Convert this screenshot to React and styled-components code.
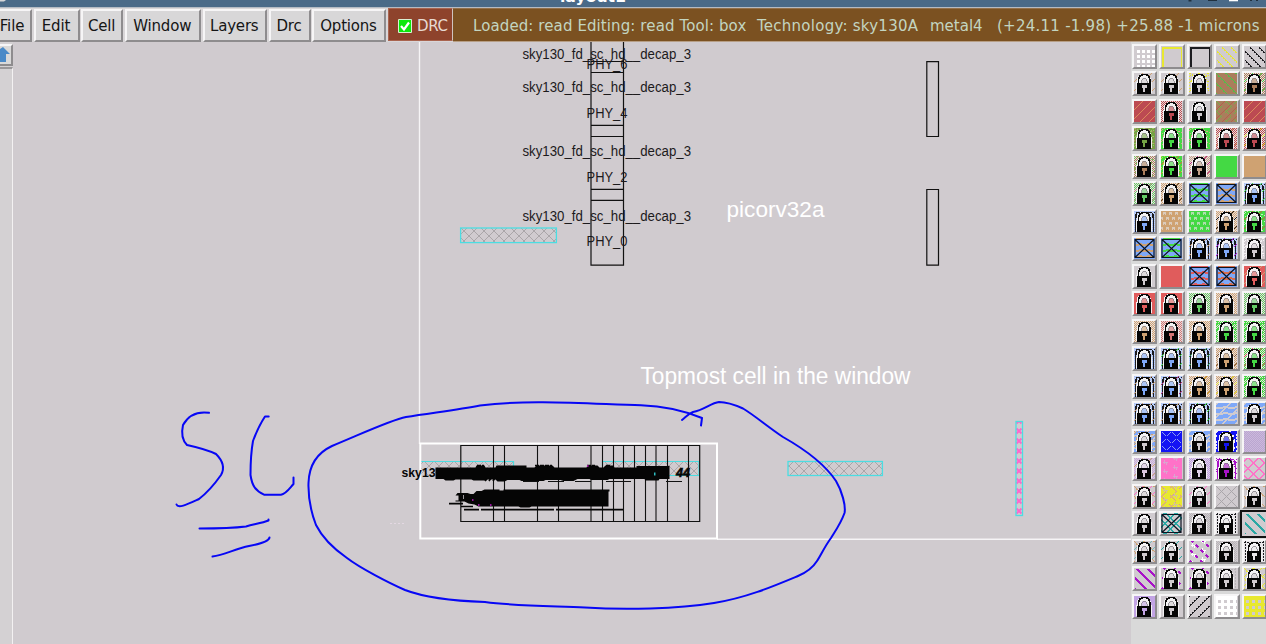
import React from 'react';
import styled, { createGlobalStyle, css } from 'styled-components';

const Global = createGlobalStyle`
  * { box-sizing: border-box; }
  html, body { margin: 0; padding: 0; overflow: hidden; }
  body { font-family: "DejaVu Sans", "Noto Sans", sans-serif; }
`;

const Window = styled.div`
  width: 1266px;
  height: 644px;
  display: flex;
  flex-direction: column;
  overflow: hidden;
  background: #d0cbcf;
`;

const TitleBar = styled.header`
  flex: none;
  height: 8px;
  display: flex;
  overflow: hidden;
  background: #4a6a88;
  border-bottom: 1px solid #b4bbc4;
`;

const TitleArt = styled.svg`
  display: block;
  width: 1266px;
  height: 7px;
`;

const MenuBar = styled.nav`
  flex: none;
  height: 34px;
  display: flex;
  align-items: stretch;
  background: #d9d6d8;
`;

const Menus = styled.div`
  width: 388px;
  flex: none;
  display: flex;
  gap: 1.5px;
  padding-top: 1px;
`;

const raised = css`
  border-style: solid;
  border-color: #f6f5f6 #8e8c8e #8e8c8e #f6f5f6;
`;

const MenuButton = styled.button`
  ${raised}
  border-width: 2px;
  ${p => p.$first && 'border-left-width: 0;'}
  width: ${p => p.$w}px;
  height: 33px;
  padding: 0 ${p => (p.$first ? 6 : 1)}px 0 0;
  background: #d8d7d8;
  color: #151515;
  font: 15px "DejaVu Sans", sans-serif;
  letter-spacing: ${p => p.$ls}px;
  white-space: nowrap;
  display: flex;
  align-items: center;
  justify-content: center;
`;

const DrcToggle = styled.div`
  width: 65px;
  flex: none;
  display: flex;
  align-items: center;
  gap: 5px;
  padding: 2px 0 0 9px;
  margin-bottom: 1px;
  background: #8e432c;
  border: 1px solid #a9644f;
  border-right: 1px solid #d0c4c0;
  color: #e6d9d2;
  font-size: 15px;
  letter-spacing: -0.4px;
`;

const Tick = styled.svg`
  width: 14px;
  height: 14px;
  flex: none;
`;

const Status = styled.div`
  flex: 1;
  display: flex;
  align-items: center;
  padding: 1px 0 0 20px;
  background: #7b5121;
  border-top: 1px solid #93704a;
  border-bottom: 1px solid #b79f86;
  color: #c3d5c0;
  font-size: 15px;
  white-space: pre;
`;

const StatusPart = styled.span`
  flex: none;
  width: ${p => p.$w}px;
  letter-spacing: ${p => p.$ls || 0}px;
`;

const Main = styled.main`
  flex: 1;
  min-height: 0;
  display: flex;
`;

const ScrollColumn = styled.div`
  flex: none;
  width: 13px;
  display: flex;
  flex-direction: column;
  background: #d4d1d3;
`;

const ScrollButton = styled.div`
  ${raised}
  border-width: 2px 2px 2px 0;
  height: 22px;
  margin-top: 2px;
  background: #d9d9d9;
`;

const ScrollTrack = styled.div`
  ${raised}
  border-width: 2px 1px 0 0;
  border-top-color: #9a989a;
  border-right-color: #f3f1f2;
  flex: 1;
  margin-top: 1px;
`;

const ArrowUp = styled.svg`
  display: block;
  width: 11px;
  height: 18px;
`;

const Layout = styled.svg`
  display: block;
  flex: none;
  width: 1118px;
  height: 602px;
  background: #d0cbcf;
  font-family: "Liberation Sans", Arial, sans-serif;
`;

const Palette = styled.aside`
  flex: none;
  width: 135px;
  padding: 1.6px 0 0 0.5px;
  background: #d9d9d9;
  overflow: hidden;
`;

const Swatches = styled.div`
  display: grid;
  grid-template-columns: repeat(5, 27.55px);
  grid-auto-rows: 27.5px;
`;

const Swatch = styled.div`
  ${raised}
  border-width: 2px;
  width: 25.6px;
  height: 25.2px;
  background: #d0cbcf;
  ${p => p.$selected && css`
    border: 2px solid #111;
    width: 28px;
    height: 28px;
    margin: -1.5px 0 0 -1.5px;
    padding: 1.5px;
  `}
`;

const SwatchArt = styled.svg`
  display: block;
  width: 21px;
  height: 21px;
  shape-rendering: crispEdges;
`;

const GREY = '#d0cbcf', TAN = '#cfa272', GREEN = '#44d944', RED = '#e05c5c', BLUE = '#7fa8f8';
const WHITE = '#f4f2f3', BLACK = '#1c1c20', YELLOW = '#e8e830', PINK = '#ff72c8', LAV = '#bd9fe0';
const PURPLE = '#a812c8', TEAL = '#2aa8a4', BROWN = '#aa7e5c', CRIMSON = '#bc4a52', NAVY = '#1414f4';

const pixels = test => {
  let d = '';
  for (let y = 0; y < 21; y++) for (let x = 0; x < 21; x++) if (test(x, y)) d += `M${x} ${y}h1v1h-1z`;
  return d;
};
const PATTERNS = {
  frame: pixels((x, y) => (y === 1 || y === 2) ? x >= 1 && x <= 20 : y > 1 && (x === 1 || x === 20 || (x === 2 && y < 21))),
  dots: pixels((x, y) => x > 2 && y > 3 && (x - 3) % 5 < 3 && (y - 4) % 5 < 3),
  grid: pixels((x, y) => !(x > 0 && y > 2 && (x + 4) % 6 < 3 && (y + 2) % 6 < 3)),
  pin: pixels((x, y) => (x + (Math.floor(y / 5) % 2) * 3 + 4) % 6 < 3 && y % 5 > 0 && y % 5 < 4 && (y % 5 !== 3 || x % 3 > 0)),
  holes: pixels((x, y) => x > 1 && y > 2 && (x - 2) % 5 < 3 && (y - 3) % 5 < 3),
  diag: pixels((x, y) => (x - y + 40) % 10 === 0 || ((x - y + 41) % 10 === 0 && y % 3 === 0)),
  bold: pixels((x, y) => x > 0 && y > 0 && ((x - y + 40) % 9 === 0 || ((x - y + 41) % 9 === 0 && y % 2 === 0))),
  rdiag: pixels((x, y) => (x + y + 1) % 9 === 0),
  rbold: pixels((x, y) => (x + y) % 10 === 0 || ((x + y) % 10 === 9 && y % 2 === 0)),
  thick: pixels((x, y) => x > 0 && y > 0 && (x - y + 43) % 11 < 3),
  dither: pixels((x, y) => (x + y) % 2 === 0),
  speck: pixels((x, y) => (x * 37 + y * 61 + x * y * 13) % 11 < 2),
  streak: pixels((x, y) => (x + y * 3 + ((x * y) % 5)) % 9 < 2),
  edge: pixels((x, y) => (y === 1 && x > 1 && x % 6 > 1) || ((x === 1 || x === 19) && y > 2) || ((x === 2 || x === 18) && y > 1 && y < 7)),
  dotEdge: pixels((x, y) => (y === 1 || x === 1 || x === 19) && (x + y) % 3 > 0),
  wave: pixels((x, y) => (y + (x % 12 > 6 ? 1 : 0)) % 6 < 4 && (x + y) % 13 > 1),
  bands: pixels((x, y) => (y + (x % 8 > 4 ? 1 : 0)) % 6 < 2 && x > 1 && x < 19),
  dash: pixels((x, y) => (x - y + 42) % 11 < 3 && (x + y) % 10 < 5),
  net: pixels((x, y) => (x + y) % 10 === 0 || (x - y + 40) % 10 === 0),
  thicknet: pixels((x, y) => (x + y + 9) % 11 < 2 || (x - y + 40) % 11 < 2),
  dashnet: pixels((x, y) => ((x + y) % 10 === 0 && x % 9 < 6) || ((x - y + 40) % 10 === 0 && y % 9 < 6)),
  blob: pixels((x, y) => { const u = x % 10, v = (y + (x > 9 ? 4 : 0)) % 9; return (u === 3 && v > 1 && v < 6) || (u === 5 && v > 3 && v < 7) || (v === 4 && u > 1 && u < 7); }),
  tri: pixels((x, y) => { const r = y % 7; const k = (x + (Math.floor(y / 7) % 2) * 5) % 10; return r > 0 && r < 5 && Math.abs(k - 5) === 5 - r; }),
};

const L = (bg, ...layers) => ({ lock: true, bg, layers });
const P = (bg, ...layers) => ({ bg, layers });
const X = (bg, ...layers) => ({ cross: true, bg, layers });
const bb = (...more) => ({ ...L('#c6d4f2', ['dither', '#a7c1fa'], ['edge', BLACK], ...more), hole: BLUE });
const D = (color, ...more) => ({ ...L('#e6dddb', ['dither', color], ...more), hole: color });

const LAYERS = [
  P(GREY, ['dots', '#ffffff']), P(GREY, ['frame', YELLOW]), P(GREY, ['frame', BLACK]), P(GREY, ['bold', YELLOW]), P(GREY, ['bold', BLACK]),
  L(GREY, ['rdiag', TAN]), L(GREY, ['rdiag', TAN]), L(GREY, ['streak', YELLOW]), P(BROWN, ['diag', '#4fc24a']), D(BROWN, ['rdiag', GREEN]),
  P(CRIMSON, ['rdiag', '#dc8a5c']), D(CRIMSON), L(GREY), P(BROWN, ['dashnet', '#70b24c'], ['rdiag', '#b5604f']), P(CRIMSON, ['rdiag', '#dc8a5c']),
  L('#74a344', ['speck', BROWN], ['streak', '#9bc466']), L(GREEN, ['speck', '#d8a58a']), L(GREEN, ['speck', '#d8a58a']), D(CRIMSON, ['rdiag', TAN]), D(CRIMSON, ['rdiag', YELLOW]),
  D(BROWN, ['speck', '#74c95e']), L(GREEN, ['rdiag', '#d96a38'], ['speck', '#b9e23f']), D('#c3a189', ['rdiag', '#c02880']), P(GREEN), P(TAN),
  D('#63cb65', ['rdiag', '#c69090']), D(TAN, ['rdiag', '#5a4026']), X(BLUE, ['bands', GREEN]), X(BLUE, ['bands', TAN]), bb(['rdiag', GREEN]),
  bb(), P(TAN, ['pin', '#dccbbb']), P(GREEN, ['pin', '#b0dcae']), D(TAN, ['rdiag', BLACK]), L(GREEN, ['speck', '#c5e8c3'], ['rdiag', '#bf603d']),
  X(BLUE, ['bands', TAN]), X(BLUE, ['bands', GREEN]), bb(['rdiag', TAN]), bb(['rdiag', PURPLE]), L(GREY, ['streak', WHITE]),
  L(GREY), P(RED), X(BLUE, ['bands', RED]), X(BLUE, ['bands', '#d96d4b']), L(RED, ['rdiag', TAN]),
  L(RED), L(RED), D('#63cb65'), D(TAN), D('#63cb65'),
  D(TAN), D('#d47575'), D(TAN), D(GREEN, ['streak', GREEN]), D(GREEN, ['streak', GREEN]),
  bb(), bb(['rdiag', GREEN]), bb(['rdiag', '#359650']), D(TAN, ['rdiag', '#7e5834']), D(GREEN, ['rdiag', RED]),
  bb(['rdiag', TAN]), bb(['rdiag', '#b42e74']), D(TAN, ['rdiag', '#c99624']), D(TAN, ['rdiag', YELLOW]), D(GREEN, ['streak', GREEN]),
  bb(['rdiag', TAN]), bb(['rdiag', TAN]), bb(['rdiag', GREEN]), P(GREY, ['wave', BLUE]), L(GREY, ['wave', BLUE]),
  L(GREY, ['wave', BLUE], ['speck', TAN]), P(NAVY, ['tri', '#8e9bed']), L(GREY, ['wave', BLUE]), { ...L(WHITE, ['edge', NAVY], ['wave', NAVY]), hole: NAVY }, P('#cbb8dc', ['dither', '#baa6d0']),
  L('#dcc9df', ['dither', '#c5b1d9'], ['rdiag', TAN]), P(PINK, ['blob', '#dba4ce']), L('#dfd2e8', ['dither', LAV]), { ...L(WHITE, ['edge', PURPLE], ['speck', PURPLE]), hole: PURPLE }, P(GREY, ['thicknet', PINK]),
  L(GREY, ['diag', TAN], ['rdiag', PINK]), P(YELLOW, ['dashnet', '#d98fa6'], ['blob', '#d3c39a']), L(GREY, ['rdiag', PINK]), P(GREY, ['net', '#aaa6aa']), L(GREY, ['diag', TAN]),
  L(GREY), X(GREY, ['thicknet', TEAL]), L(GREY, ['dither', '#b7b4b7']), L('#e9e7e9', ['dotEdge', BLACK]), { ...P(GREY, ['thick', TEAL]), selected: true },
  L(GREY, ['diag', TAN], ['rdiag', '#76bcb9']), L(GREY, ['rdiag', TEAL]), P(GREY, ['blob', '#ffffff'], ['dash', PURPLE]), L(GREY, ['dither', '#b7b4b7']), L('#e9e7e9', ['dotEdge', BLACK]),
  P(GREY, ['thick', PURPLE]), L(GREY, ['dash', PURPLE]), L(GREY, ['dash', PURPLE]), L(GREY, ['dotEdge', '#b7b4b7']), L(GREY, ['rdiag', YELLOW], ['diag', YELLOW]),
  L('#c2a4e4'), L(GREY), P(GREY, ['rbold', BLACK]), P(GREY, ['grid', '#ffffff']), P(GREY, ['grid', YELLOW]),
];

function Lock({ color }) {
  return (
    <g>
      <path d="M3 10V6l1-3 3-2.500h6l3 2.500 1 3v4z" fill="#f3f2f3" />
      <path d="M7.500 10V6.500L9 4.500h2.500L13 6.500V10z" fill={color} opacity=".6" />
      <path d="M4.500 11V6l1.300-3L8.500 1.500h3.500L14.500 3l1.200 3v5" fill="none" stroke="#0a0a0a" strokeWidth="1.800" />
      <path d="M7.200 11V7.500L9 5.800h2.500L13 7.500V11" fill="none" stroke="#77747a" strokeWidth=".7" />
      <path d="M2 9h1v11H2zM17 9h1v11h-1z" fill="#f3f2f3" />
      <path d="M3 10h14v10.500H3z" fill="#050505" />
      <path d="M8 12h4.500v3H11.300v3.500H9.200V15H8z" fill={color} />
    </g>
  );
}

function LayerSwatch({ spec }) {
  return (
    <Swatch $selected={spec.selected}>
      <SwatchArt viewBox="0 0 21 21">
        <path d="M0 0h21v21H0z" fill={spec.bg} />
        {spec.layers.map(([name, color], i) => <path key={i} d={PATTERNS[name]} fill={color} />)}
        {spec.cross && <path d="M1 1.500h19v18H1zM1 1.500l19 18M20 1.500l-19 18" fill="none" stroke="#0c1420" strokeWidth="1.200" shapeRendering="auto" />}
        {spec.lock && <Lock color={spec.hole || spec.bg} />}
      </SwatchArt>
    </Swatch>
  );
}

const MENUS = [
  ['File', 32, -0.1], ['Edit', 46, -0.1], ['Cell', 42, -0.2], ['Window', 76.5, -0.2],
  ['Layers', 64.5, -0.2], ['Drc', 42, -0.2], ['Options', 74, -0.2],
];

const DECAPS = [[58.5, 69, 'PHY_6'], [92, 117.500, 'PHY_4'], [156, 181.500, 'PHY_2'], [221, 246, 'PHY_0']];
const COLUMN_LINES = [493.5, 504.5, 537.5, 558.5, 591, 602.5, 613.5, 623.5, 634.5, 645.5, 656, 667.5, 688.5];

function CellLabel({ x, y, width, children }) {
  return <text x={x} y={y} fontSize="13.800" textLength={width} lengthAdjust="spacingAndGlyphs" fill="#1c1a1c">{children}</text>;
}

function Metal({ x, y, w, h, fill = 'url(#metal)' }) {
  return <rect x={x} y={y} width={w} height={h} fill={fill} stroke="#4bdde2" strokeWidth="1.3" />;
}

function LayoutView() {
  return (
    <Layout viewBox="13 42 1118 602">
      <defs>
        <pattern id="metal" width="10" height="10" x="464" y="231" patternUnits="userSpaceOnUse">
          <path d="M0 0l10 10M10 0L0 10" stroke="#aaa6a9" strokeWidth="1" />
        </pattern>
        <pattern id="via" width="8" height="10" x="1015" y="426" patternUnits="userSpaceOnUse">
          <path d="M1.500 2.500l5 5M6.500 2.500l-5 5" stroke="#ff66ca" strokeWidth="2" />
        </pattern>
      </defs>
      <path d="M419.500 42v402M717 539.300h414" stroke="#f6f4f6" strokeWidth="1.400" fill="none" />

      <g fill="none" stroke="#111" strokeWidth="1.200">
        <path d="M591 42V265.200H623.500V42M591 61.500h32.500M591 72.500h32.500M591 125.300h32.500M591 136.500h32.500M591 189.300h32.500M591 200.300h32.500" />
        <path d="M926.800 61.700h11.700v74.800h-11.700zM926.800 189.500h11.700v75.700h-11.700z" />
      </g>
      {DECAPS.map(([nameY, idY, id]) => (
        <g key={id}>
          <CellLabel x={522.5} y={nameY} width={168.5}>sky130_fd_sc_hd__decap_3</CellLabel>
          <CellLabel x={586.5} y={idY} width={41}>{id}</CellLabel>
        </g>
      ))}
      <Metal x={460.6} y={228} w={95.8} h={14.6} />
      <Metal x={788} y={461.5} w={94.4} h={14} />
      <Metal x={1016} y={421.5} w={6.5} h={94} fill="url(#via)" />

      <text x="726.500" y="217" fontSize="22.500" textLength="98" lengthAdjust="spacingAndGlyphs" fill="#fff">picorv32a</text>
      <text x="640.500" y="383.500" fontSize="23" textLength="270" lengthAdjust="spacingAndGlyphs" fill="#fff">Topmost cell in the window</text>

      <path d="M421 461.500h92v14.500h-92zM602 461.500h97v14.500h-97z" fill="url(#metal)" />
      <path d="M421 461.500h92.500v7M602.500 466v-4.500h96.500v14h-30" fill="none" stroke="#4bdde2" strokeWidth="1.200" />
      <path d="M420.300 443.500H717V538.500H420.300z" fill="none" stroke="#fff" strokeWidth="2" />
      <path d="M460.800 445.500H699.700V521.500H460.800z" fill="none" stroke="#111" strokeWidth="1.200" />
      <g stroke="#111" strokeWidth="1.100">
        {COLUMN_LINES.map(x => <path key={x} d={`M${x} 445.500V521.500`} />)}
      </g>

      <text x="401.500" y="477" fontSize="13.500" fontWeight="bold" textLength="34" lengthAdjust="spacingAndGlyphs" fill="#050505">sky13</text>
      <path d="M435.500 467.500h40l1-2h8l1 2h10l1-2h30v2h8l2-2h16l2 2h32l1-2h10l2 2h4l2-2h8l1 2h22v-1.500h33v13h-10l-1 1.500h-13l-1-1.500h-35l-2 1h-16l-2-1h-12l-4 2h-10l-3-1h-15l-2 1h-22l-2-1h-12l-3 1.500h-7l-2-2h-8l-2 1h-12l-2-1h-16l-2 1h-8l-2-1.500h-8z" fill="#050505" />
      <path d="M477 465.500h7M535 465.500h17M587 465.500h8M606 465.500h4" stroke="#050505" strokeWidth="1.500" strokeDasharray="4 1" fill="none" />
      <path d="M485 481l2-2M489 481l2-3M493 481l2-3" stroke="#050505" strokeWidth="1.600" />
      <text x="676" y="477" fontSize="13.500" fontWeight="bold" fontStyle="italic" textLength="14" lengthAdjust="spacingAndGlyphs" fill="#050505" stroke="#050505" strokeWidth=".6">44</text>
      <path d="M457.500 493h10l3 1h3l3-3h5l3-1.500h15v1h4v-1h106v2h-1v15h-77l-2 1h-9l-2-1h-40l-4-2-6-1-4-2h-9v-1h3v-5h-3z" fill="#050505" />
      <path d="M449 503.700h14M461 506.500h12M464 509.700h15M481 509.700h73M556 509.700h67" stroke="#050505" strokeWidth="1.700" />
      <path d="M523 481.500h16M548 481.500h16M575 481.500h16M606 481.500h25M666 481.500h16" stroke="#111" strokeWidth="1.200" />
      <path d="M463.500 495v4" fill="none" stroke="#9a969a" strokeWidth="1" />
      <path d="M472 500h1.500M478 505h1.500M490 505h1.500M587 466h1.500" stroke="#c81ad0" strokeWidth="1.500" />
      <path d="M654 474h1.500" stroke="#2dbcc0" strokeWidth="3" />
      <path d="M390 523.500h15" stroke="#e3d8e2" strokeWidth="1" strokeDasharray="2 2" />

      <g fill="none" stroke="#0707f5" strokeWidth="2" strokeLinecap="round" strokeLinejoin="round">
        <path d="M209 412.800C196 411 188 416 183 425C181 434 182 440 187 445C196 447 208 450 216 454C223 461 225 468 221 475C214 485 208 492 199 499C188 504 178 509 176.500 504.500" />
        <path d="M268.700 416.500H265C260 424 256 433 253 441C251 452 250.500 464 250.500 475C252 486 256 491 264 494.700H281C286 494 289 489 293.500 484V477.500" />
        <path d="M199.500 528.500C217 528.500 234 528 246 526.500C255 524 262 523 268.500 520.500V519.500" />
        <path d="M212.500 556.500C224 555 235 549 249 546C260 544 269 541 269.500 537.500" />
        <path d="M701 425.500L702 418C685 411 665 406 641 405.200C612 404.500 580 402.500 543 402.200C520 402 501 403 480 405.500C457 410 430 413 406 417C391 420 368 431 332 446C317 453 309 465 308.500 483C308 499 311 512 316 525C323 539 334 549 347 558C360 568 389 583 405 590C426 598 455 601 485 602C515 606 550 606 585 607.500C624 610 677 609 714 603C746 598 774 586 798 576C805 573 812 569 817 561C821 555 825 546 831 538C836 530 841 523 844.500 513C846 506 842 491 836 481C826 466 806 450 783 437C768 427 754 415 743 408.500C733 404 726 402 719 402C711 403 704 410 693 412C688 414 686 417 682 420" />
      </g>
    </Layout>
  );
}

export default function App() {
  return (
    <Window>
      <Global />
      <TitleBar>
        <TitleArt viewBox="0 0 1266 7">
          <path d="M0 0h6l-2 1.500H0z" fill="#d5d5d8" />
          <text x="560" y="1.500" fontFamily="DejaVu Sans, sans-serif" fontWeight="bold" fontSize="15" textLength="66" lengthAdjust="spacingAndGlyphs" fill="#fff">layout1</text>
          <path d="M1188.500 0h3v1.500h-3zM1208 0h9v1h-9zM1250 0h2v1h-2zM1256 0h2v1h-2z" fill="#20303e" />
          <path d="M1229 0h9v1.300h-9z" fill="#fff" />
        </TitleArt>
      </TitleBar>
      <MenuBar>
        <Menus>
          {MENUS.map(([label, w, ls], i) => <MenuButton key={label} $w={w} $ls={ls} $first={i === 0}>{label}</MenuButton>)}
        </Menus>
        <DrcToggle>
          <Tick viewBox="0 0 14 14">
            <path d="M.5.500h13v13H.5z" fill="#0be80b" stroke="#d9f0d4" />
            <path d="M3 7l3 3.500L11 3.500" fill="none" stroke="#fff" strokeWidth="2.200" />
          </Tick>
          DRC
        </DrcToggle>
        <Status>
          <StatusPart $w={284} $ls={0.1}>Loaded: read Editing: read Tool: box</StatusPart>
          <StatusPart $w={173} $ls={0.25}>Technology: sky130A</StatusPart>
          <StatusPart $w={67}>metal4</StatusPart>
          <StatusPart $w={268} $ls={0.25}>(+24.11 -1.98) +25.88 -1 microns</StatusPart>
        </Status>
      </MenuBar>
      <Main>
        <ScrollColumn>
          <ScrollButton>
            <ArrowUp viewBox="0 0 11 18">
              <path d="M3 1l7 7H6v8H0V3z" fill="#4a8ac8" />
            </ArrowUp>
          </ScrollButton>
          <ScrollTrack />
        </ScrollColumn>
        <LayoutView />
        <Palette>
          <Swatches>
            {LAYERS.map((spec, i) => <LayerSwatch key={i} spec={spec} />)}
          </Swatches>
        </Palette>
      </Main>
    </Window>
  );
}
